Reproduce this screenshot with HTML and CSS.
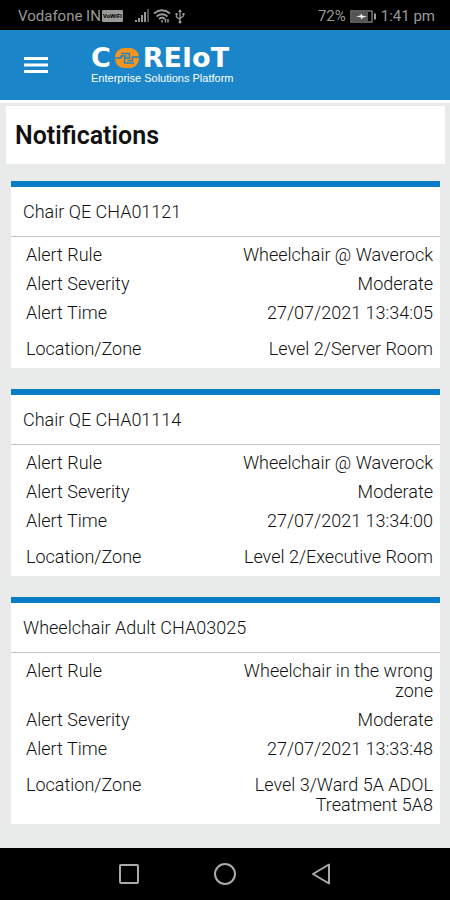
FILE: index.html
```html
<!DOCTYPE html>
<html lang="en">
<head>
<meta charset="utf-8">
<meta name="viewport" content="width=device-width, initial-scale=1">
<title>Notifications</title>
<link rel="stylesheet" href="styles.css">
</head>
<body>
<div class="status">
  <div class="status-group">
    <span>Vodafone IN</span>
    <span class="vowifi">VoWiFi</span>
    <svg class="signal" width="14" height="14" viewBox="0 0 14 14" fill="currentColor"><path d="M0 11h2v2H0zM3 9h2v4H3zM6 6h2v7H6zM9 3h2v10H9z"/><path d="M12 0h2v13h-2z" opacity=".55"/></svg>
    <svg class="wifi" width="18" height="14" viewBox="0 0 18 14" fill="none" stroke="currentColor" stroke-width="1.7"><path d="M1 4.5Q9-2 17 4.500M3.500 7.500Q9 3 14.500 7.500M6 10Q9 7.500 12 10"/><path d="M9 11v2.500M12.500 10v3.500M15 10v3.500" stroke-width="1.500"/></svg>
    <svg width="10" height="15" viewBox="0 0 10 15" fill="none" stroke="currentColor" stroke-width="1.300"><path d="M5 2v10M1.500 5v3L5 10.500M8.500 5v2L5 9.500"/><path d="M5 0L3 3h4zM0.500 4h2v2h-2zM7.500 4h2v2h-2z" fill="currentColor" stroke="none"/><circle cx="5" cy="13" r="1.500" fill="currentColor" stroke="none"/></svg>
  </div>
  <div class="status-group">
    <span>72%</span>
    <svg class="battery" width="27" height="13" viewBox="0 0 27 13"><rect x="1" y="1" width="21" height="11" fill="none" stroke="#777" stroke-width="1.500"/><path d="M2 2h16v9H2z" fill="#555"/><path d="M24 3.500h2v6h-2z" fill="#999"/><path d="M6 6.500l4-1 2-2v2l5 1-4 1-2 2v-2z" fill="#eee"/></svg>
    <span>1:41 pm</span>
  </div>
</div>
<header class="appbar">
  <button class="menu" type="button" aria-label="Menu">
    <svg width="26" height="18" viewBox="0 0 26 18" fill="#fff"><path d="M1 1h24v3H1zM1 7.500h24v3H1zM1 14h24v3H1z"/></svg>
  </button>
  <div class="brand">
    <div class="wordmark">
      <span>C</span>
      <svg width="24" height="20" viewBox="0 0 24 20"><rect width="24" height="20" rx="9" fill="#f7941d"/><g fill="none" stroke="#1a85c9" stroke-width="1.400"><path d="M6 5.500h8.500v4.500H9.500v5H19"/><path d="M0 10h6V8h5.500M24 9h-6.500v3.500H12.500"/></g></svg>
      <span>REIoT</span>
    </div>
    <div class="tagline">Enterprise Solutions Platform</div>
  </div>
</header>
<main>
  <h1>Notifications</h1>
  <section class="card">
    <h2>Chair QE CHA01121</h2>
    <dl>
      <div class="row"><dt>Alert Rule</dt><dd>Wheelchair @ Waverock</dd></div>
      <div class="row"><dt>Alert Severity</dt><dd>Moderate</dd></div>
      <div class="row"><dt>Alert Time</dt><dd>27/07/2021 13:34:05</dd></div>
      <div class="row location"><dt>Location/Zone</dt><dd>Level 2/Server Room</dd></div>
    </dl>
  </section>
  <section class="card">
    <h2>Chair QE CHA01114</h2>
    <dl>
      <div class="row"><dt>Alert Rule</dt><dd>Wheelchair @ Waverock</dd></div>
      <div class="row"><dt>Alert Severity</dt><dd>Moderate</dd></div>
      <div class="row"><dt>Alert Time</dt><dd>27/07/2021 13:34:00</dd></div>
      <div class="row location"><dt>Location/Zone</dt><dd>Level 2/Executive Room</dd></div>
    </dl>
  </section>
  <section class="card">
    <h2>Wheelchair Adult CHA03025</h2>
    <dl>
      <div class="row"><dt>Alert Rule</dt><dd>Wheelchair in the wrong zone</dd></div>
      <div class="row"><dt>Alert Severity</dt><dd>Moderate</dd></div>
      <div class="row"><dt>Alert Time</dt><dd>27/07/2021 13:33:48</dd></div>
      <div class="row location"><dt>Location/Zone</dt><dd>Level 3/Ward 5A ADOL Treatment 5A8</dd></div>
    </dl>
  </section>
</main>
<nav class="softkeys">
  <button type="button" aria-label="Recent apps"><svg width="24" height="24" viewBox="0 0 24 24"><rect x="3" y="3" width="18" height="18" rx="1"/></svg></button>
  <button type="button" aria-label="Home"><svg width="24" height="24" viewBox="0 0 24 24"><circle cx="12" cy="12" r="10"/></svg></button>
  <button type="button" aria-label="Back"><svg width="24" height="24" viewBox="0 0 24 24"><path d="M20 2.500v19L4 12z"/></svg></button>
</nav>
</body>
</html>
```
FILE: styles.css
```css
* { box-sizing: border-box; }

body {
  margin: 0;
  min-height: 100vh;
  display: flex;
  flex-direction: column;
  background: #e9ebea;
  color: #111;
  font-family: Roboto, "Liberation Sans", sans-serif;
  font-size: 18px;
  font-weight: 300;
  line-height: 20px;
}

h1, h2, dl, dd { margin: 0; }

button {
  display: flex;
  padding: 0;
  border: 0;
  background: none;
}

.status {
  display: flex;
  justify-content: space-between;
  height: 30px;
  padding: 2px 15px 0 18px;
  background: #000;
  color: #999;
  font-size: 15px;
  font-weight: 400;
}

.status-group {
  display: flex;
  align-items: center;
  gap: 4px;
}

.vowifi {
  margin-left: -3px;
  padding: 0 1px;
  border-radius: 1px;
  background: #999;
  color: #000;
  font-size: 6px;
  font-weight: 700;
  line-height: 12px;
}

.signal { margin-left: 8px; }

.appbar {
  display: flex;
  align-items: center;
  gap: 42px;
  height: 70px;
  padding: 0 23px;
  background: #1a85c9;
  color: #fff;
}

.wordmark {
  display: flex;
  align-items: center;
  gap: 4px;
  font: 700 27px/26px "DejaVu Sans", sans-serif;
}

.tagline {
  font: 11px/14px "Liberation Sans", sans-serif;
}

main {
  flex: 1;
  display: flex;
  flex-direction: column;
  gap: 21px;
  padding: 3px 10px 24px 11px;
  border-top: 3px solid #fbfdfd;
}

h1 {
  margin: 0 -5px -4px;
  padding: 18px 9px 16px;
  background: #fff;
  color: #111;
  font-size: 25px;
  font-weight: 600;
  line-height: 24px;
}

.card {
  border-top: 6px solid #087cc4;
  background: #fff;
}

h2 {
  padding: 15px 12px 14px;
  border-bottom: 1px solid #c4c6c6;
  font-size: 18px;
  font-weight: 300;
  line-height: 20px;
}

dl {
  display: flex;
  flex-direction: column;
  gap: 9px;
  padding: 8px 7px 9px 15px;
}

.row {
  display: grid;
  grid-template-columns: 1fr 1fr;
}

.row dd { text-align: right; }

.location { padding-top: 7px; }

.softkeys {
  display: flex;
  justify-content: center;
  align-items: center;
  gap: 72px;
  height: 52px;
  background: #000;
}

.softkeys svg {
  fill: none;
  stroke: #aaa;
  stroke-width: 2;
  stroke-linejoin: round;
}
```
